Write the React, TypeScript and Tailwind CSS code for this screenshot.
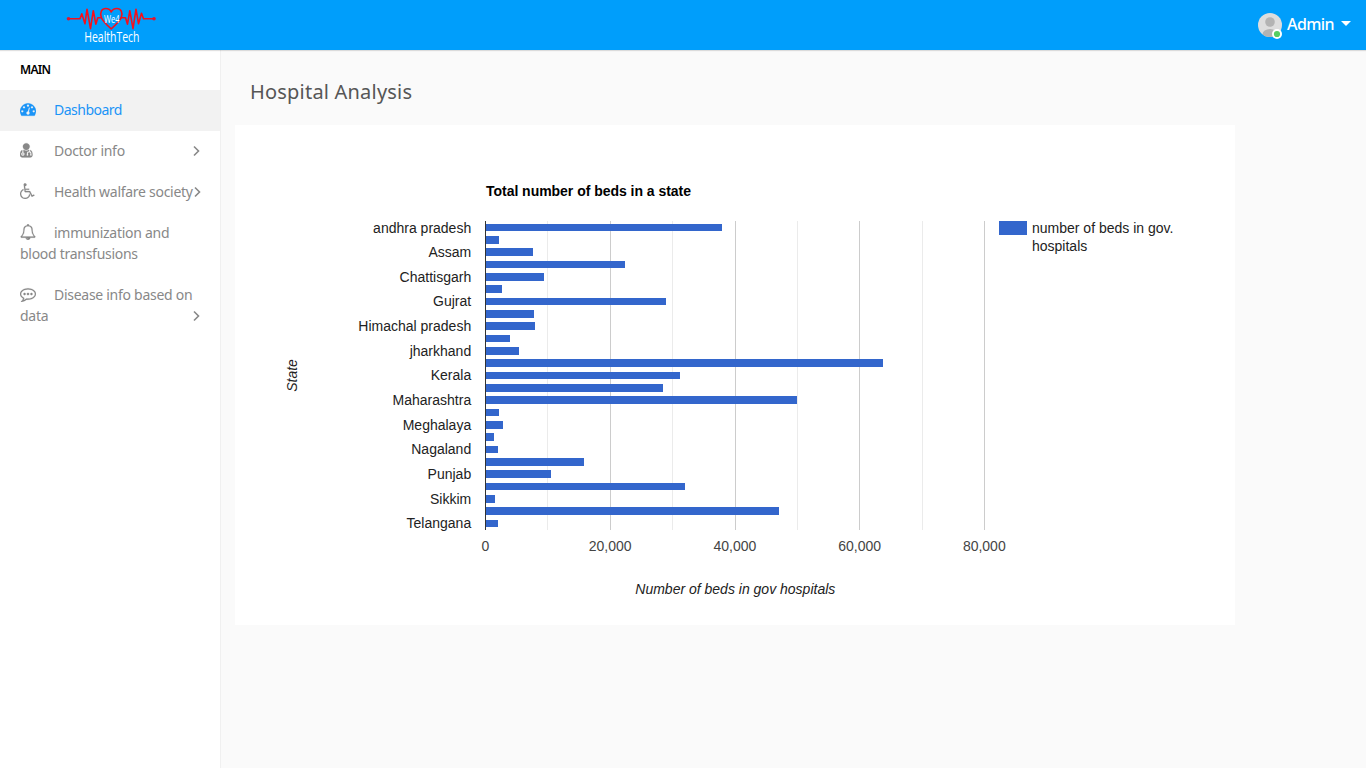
import type { ReactNode } from "react";

const ICONS = {
  dashboard:
    "M384 1152q0-53-37.5-90.5t-90.5-37.5-90.5 37.5-37.5 90.5 37.5 90.5 90.5 37.5 90.5-37.5 37.5-90.5zm192-448q0-53-37.5-90.5t-90.5-37.5-90.5 37.5-37.5 90.5 37.5 90.5 90.5 37.5 90.5-37.5 37.5-90.5zm428 481l101-382q6-26-7.5-48.5t-38.5-29.5-48 6.5-30 39.5l-101 382q-60 5-107 43.5t-63 98.5q-20 77 20 146t117 89 146-20 89-117q16-60-6-117t-72-91zm660-33q0-53-37.5-90.5t-90.5-37.5-90.5 37.5-37.5 90.5 37.5 90.5 90.5 37.5 90.5-37.5 37.5-90.5zm-640-640q0-53-37.5-90.5t-90.5-37.5-90.5 37.5-37.5 90.5 37.5 90.5 90.5 37.5 90.5-37.5 37.5-90.5zm448 192q0-53-37.5-90.5t-90.5-37.5-90.5 37.5-37.5 90.5 37.5 90.5 90.5 37.5 90.5-37.5 37.5-90.5zm320 448q0 261-141 483-19 29-54 29h-1402q-35 0-54-29-141-221-141-483 0-182 71-348t191-286 286-191 348-71 348 71 286 191 191 286 71 348z",
  doctor:
    "M384 1344q0 26-19 45t-45 19-45-19-19-45 19-45 45-19 45 19 19 45zm1024 120q0 120-73 189.5t-194 69.5h-874q-121 0-194-69.5t-73-189.5q0-65 5.5-131t24-138 47.5-132.5 81-103 120-60.5q-22 26-22 61v203q-58 20-93 70t-35 111q0 80 56 136t136 56 136-56 56-136q0-61-35.5-111t-92.5-70v-203q0-62 25-93 132 104 295 104t295-104q25 31 25 93v64q-106 0-181 75t-75 181v89q-32 29-32 71 0 40 28 68t68 28 68-28 28-68q0-42-32-71v-89q0-52 38-90t90-38 90 38 38 90v89q-32 29-32 71 0 40 28 68t68 28 68-28 28-68q0-42-32-71v-89q0-68-34.5-127.5t-93.5-93.5q0-100-22-160q68 15 120 60.5t81 103 47.5 132.5 24 138 5.5 131zm-320-952q0 159-112.5 271.5t-271.5 112.5-271.5-112.5-112.5-271.5 112.5-271.5 271.5-112.5 271.5 112.5 112.5 271.5z",
  wheelchair:
    "M1023 1187l102 204q-58 179-210 290t-339 111q-156 0-288.5-77.5t-210-210-77.5-288.5q0-181 104.5-330t274.5-211l17 131q-122 54-195 165.5t-73 244.5q0 185 131.5 316.5t316.5 131.5q126 0 232.5-65t165-175.5 49.5-236.5zm548 98l58 114-256 128q-13 7-29 7-40 0-57-35l-239-477h-472q-24 0-42.5-16.5t-21.5-40.5l-96-779q-2-17 6-42 14-51 57-82.5t97-31.5q66 0 113 47t47 113q0 69-52 117.5t-120 41.5l37 289h423v128h-407l16 128h455q40 0 57 35l228 455z",
  bell:
    "M912 1696q0-16-16-16-59 0-101.5-42.5t-42.5-101.5q0-16-16-16t-16 16q0 73 51.5 124.5t124.5 51.5q16 0 16-16zm-666-288h1300q-266-300-266-832 0-51-24-105t-69-103-121.5-80.5-169.5-31.5-169.5 31.5-121.5 80.5-69 103-24 105q0 532-266 832zm1482 0q0 52-38 90t-90 38h-448q0 106-75 181t-181 75-181-75-75-181h-448q-52 0-90-38t-38-90q50-42 91-88t85-119.5 74.5-158.5 50-206 19.5-260q0-152 117-282.5t307-158.5q-8-19-8-39 0-40 28-68t68-28 68 28 28 68q0 20-8 39 190 28 307 158.5t117 282.5q0 139 19.5 260t50 206 74.5 158.5 85 119.5 91 88z",
  comment:
    "M640 896q0 53-37.5 90.5t-90.5 37.5-90.5-37.5-37.5-90.5 37.5-90.5 90.5-37.5 90.5 37.5 37.5 90.5zm384 0q0 53-37.5 90.5t-90.5 37.5-90.5-37.5-37.5-90.5 37.5-90.5 90.5-37.5 90.5 37.5 37.5 90.5zm384 0q0 53-37.5 90.5t-90.5 37.5-90.5-37.5-37.5-90.5 37.5-90.5 90.5-37.5 90.5 37.5 37.5 90.5zm-512-512q-204 0-381.5 69.5t-282 187.5-104.5 255q0 112 71.5 213.5t201.5 175.5l87 50-27 96q-24 91-70 172 152-63 275-171l43-38 57 6q69 8 130 8 204 0 381.5-69.5t282-187.5 104.5-255-104.5-255-282-187.5-381.5-69.5zm896 512q0 174-120 321.5t-326 233-450 85.5q-70 0-145-8-198 175-460 242-49 14-114 22h-5q-15 0-27-10.5t-16-27.5v-1q-3-4-.5-12t2-10 4.5-9.5l6-9 7-8.5 8-9q7-8 31-34.5t34.5-38 31-39.5 32.5-51 27-59 26-76q-157-89-247.5-220t-90.5-281q0-130 71-248.5t191-204.5 286-136.5 348-50.5 348 50.5 286 136.5 191 204.5 71 248.5z",
};

function NavIcon({ name }: { name: keyof typeof ICONS }) {
  return (
    <svg
      viewBox="0 0 1792 1792"
      className="mr-[18px] inline-block size-4 align-[-2px]"
      fill="currentColor"
      stroke="currentColor"
      strokeWidth="20"
    >
      <path d={ICONS[name]} />
    </svg>
  );
}

function Chevron() {
  return (
    <svg viewBox="0 0 8 12" className="h-3 w-2 shrink-0" fill="none" stroke="currentColor" strokeWidth="1.6">
      <path d="M2 1.500 6.500 6 2 10.500" />
    </svg>
  );
}

function NavItem({ icon, active, arrow, children }: { icon: keyof typeof ICONS; active?: boolean; arrow?: boolean; children: ReactNode }) {
  return (
    <a
      className={
        "flex items-end whitespace-nowrap pt-[9px] pr-5 pb-[11px] pl-5 text-[14px] leading-[21px] tracking-[-0.28px] " +
        (active ? "bg-[#f2f2f2] text-[#1b94f7]" : "text-[#888]")
      }
    >
      <span className="w-[173px]">
        <NavIcon name={icon} />
        {children}
      </span>
      {arrow && (
        <span className="flex h-[21px] items-center">
          <Chevron />
        </span>
      )}
    </a>
  );
}

function Logo() {
  return (
    <svg className="ml-[60px] h-[50px] w-[140px]" viewBox="60 0 140 50">
      <g fill="none" stroke="#f5101c" strokeWidth="1.600" strokeLinejoin="round" strokeLinecap="round">
        <path d="M69 18.700H80l1.800-5 3.200 10 2-14.500 3.500 19.500 2.800-18 2.500 13.500 2-6.500H101" />
        <path d="M154 18.700H143.500l-2-5.500-3 10.500-2.500-14.500-3 19.500-3.200-18-2.300 13.500-2-6.500H121" />
        <path d="M101.300 17.500C99.500 12 102 8.500 105.700 8.500c2.800 0 4.700 1.300 5.500 3.500 1-2.200 2.900-3.500 5.700-3.500 4 0 6.300 4 4.400 9-1.600 4-5.600 7.300-10.100 11.300-4.300-3.700-8.300-7.300-9.900-11.300z" />
      </g>
      <circle cx="68.500" cy="18.700" r="1.800" fill="#e01530" />
      <circle cx="154" cy="18.700" r="1.800" fill="#e01530" />
      <text transform="translate(104 23.300) scale(0.720 1)" className="fill-white font-['Open_Sans',sans-serif] text-[10.500px]">
        We4
      </text>
      <text transform="translate(84.300 42.300) scale(0.720 1)" className="fill-white font-['Open_Sans',sans-serif] text-[14.500px]">
        HealthTech
      </text>
    </svg>
  );
}

// [top, height, right edge] of each bar, in chart units
const BARS = [
  [224, 7, 722], [236, 8, 499], [248, 8, 533], [261, 7, 625], [273, 8, 544],
  [285, 8, 502], [298, 7, 666], [310, 8, 534], [322, 8, 535], [335, 7, 510],
  [347, 8, 519], [359, 8, 883], [372, 7, 680], [384, 8, 663], [396, 8, 797],
  [409, 7, 499], [421, 8, 503], [433, 8, 494], [446, 7, 498], [458, 8, 584],
  [470, 8, 551], [483, 7, 685], [495, 8, 495], [507, 8, 779], [520, 7, 498],
];

const STATES = [
  "andhra pradesh", "Assam", "Chattisgarh", "Gujrat", "Himachal pradesh", "jharkhand", "Kerala",
  "Maharashtra", "Meghalaya", "Nagaland", "Punjab", "Sikkim", "Telangana",
];

const TICKS: [number, string][] = [[485.5, "0"], [610.2, "20,000"], [734.9, "40,000"], [859.6, "60,000"], [984.3, "80,000"]];

function BedsChart() {
  return (
    <svg viewBox="235 125 1000 500" className="block h-[500px] w-[1000px] bg-white font-['Liberation_Sans',Arial,sans-serif] text-[14px]">
      <text x="486" y="195.900" className="fill-black font-bold" textLength="205">
        Total number of beds in a state
      </text>
      {[547, 672, 797, 922].map((x) => (
        <rect key={x} x={x} y="221" width="1" height="309" fill="#ebebeb" />
      ))}
      {[610, 735, 859, 984].map((x) => (
        <rect key={x} x={x} y="221" width="1" height="309" fill="#ccc" />
      ))}
      {BARS.map(([y, h, right]) => (
        <rect key={y} x="486" y={y} width={right - 486} height={h} fill="#3366cc" />
      ))}
      <rect x="485" y="221" width="1" height="309" fill="#333" />
      {STATES.map((s, i) => (
        <text key={s} x="471.200" y={232.58 + i * 24.63} textAnchor="end" fill="#222">
          {s}
        </text>
      ))}
      {TICKS.map(([x, t]) => (
        <text key={t} x={x} y="551" textAnchor="middle" fill="#444">
          {t}
        </text>
      ))}
      <text x="735.300" y="593.900" textAnchor="middle" fill="#222" fontStyle="italic">
        Number of beds in gov hospitals
      </text>
      <text transform="translate(297 375.500) rotate(-90)" textAnchor="middle" fill="#222" fontStyle="italic">
        State
      </text>
      <rect x="999" y="221" width="28" height="14" fill="#3366cc" />
      <text x="1032" y="232.900" fill="#222">number of beds in gov.</text>
      <text x="1032" y="250.900" fill="#222">hospitals</text>
    </svg>
  );
}

export default function App() {
  return (
    <div className="flex h-screen flex-col overflow-hidden bg-[#fafafa] font-['Noto_Sans',sans-serif]">
      <header className="z-10 flex h-[50px] shrink-0 items-center justify-between bg-[#009efb] pr-[15px] shadow-[0_1px_1px_rgba(0,0,0,0.12)]">
        <Logo />
        <div className="flex items-center text-white">
          <svg viewBox="0 0 26 28" className="mt-1 h-7 w-[26px]">
            <defs>
              <clipPath id="face">
                <circle cx="12" cy="12" r="12" />
              </clipPath>
            </defs>
            <g clipPath="url(#face)">
              <rect width="24" height="24" fill="#ddd" />
              <circle cx="12" cy="9" r="4.800" fill="#b3b3b3" />
              <ellipse cx="12" cy="21.500" rx="7.500" ry="5.500" fill="#b3b3b3" />
            </g>
            <circle cx="19" cy="21" r="5" fill="#fff" />
            <circle cx="19" cy="21" r="3.100" fill="#55ce63" />
          </svg>
          <span className="-mt-0.5 ml-[3px] w-[47px] text-[16px] leading-6 font-medium tracking-[-0.6px]">Admin</span>
          <span className="-mt-[3px] ml-[7px] border-x-[5px] border-t-[5px] border-x-transparent border-t-white" />
        </div>
      </header>
      <div className="flex min-h-0 flex-1">
        <aside className="w-[221px] shrink-0 border-r border-[#f0f0f0] bg-white">
          <div className="h-10 px-5 pt-[9px] text-[12px] leading-[21px] font-semibold tracking-[-0.7px] text-black">MAIN</div>
          <nav>
            <NavItem icon="dashboard" active>
              <span className="tracking-[-0.500px]">Dashboard</span>
            </NavItem>
            <NavItem icon="doctor" arrow>Doctor info</NavItem>
            <NavItem icon="wheelchair" arrow>Health walfare society</NavItem>
            <NavItem icon="bell">immunization and<br />blood transfusions</NavItem>
            <NavItem icon="comment" arrow>Disease info based on<br />data</NavItem>
          </nav>
        </aside>
        <main className="min-w-0 flex-1 pl-[14px]">
          <h1 className="h-[75px] pt-[30px] pl-[15px] text-[20px] leading-6 tracking-[0.2px] text-[#565656]">Hospital Analysis</h1>
          <BedsChart />
        </main>
      </div>
    </div>
  );
}
